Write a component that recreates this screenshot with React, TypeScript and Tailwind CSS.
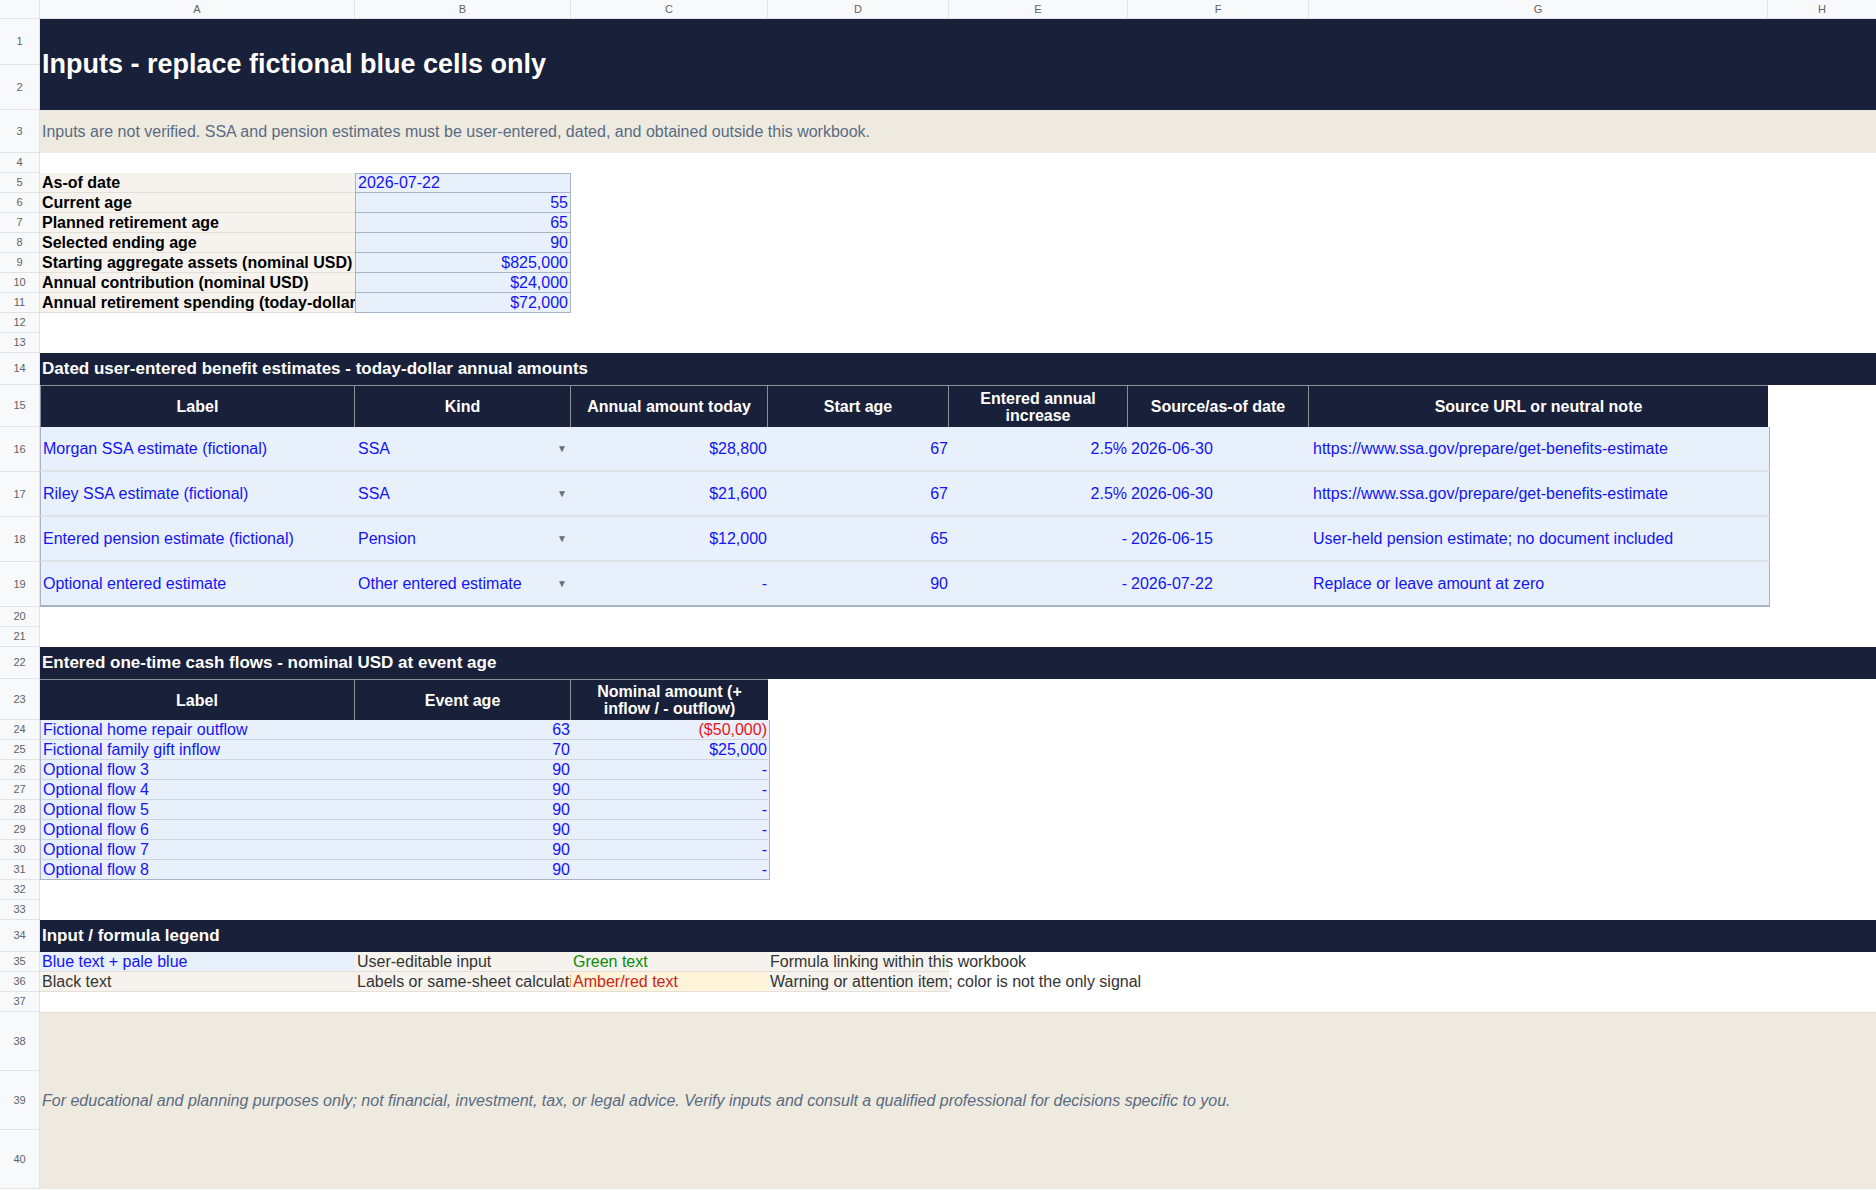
import React from 'react';

const W = ['w-[315px]', 'w-[216px]', 'w-[197px]', 'w-[181px]', 'w-[179px]', 'w-[181px]', 'w-[459px]'];
const BLUE = 'text-[#1414f5]';

function RowNum({ n, className = '' }: { n: string; className?: string }) {
  return (
    <div className={`w-[40px] shrink-0 bg-[#f8f9fa] border-r border-b border-[#e1e3e6] text-[11px] text-[#5f6368] flex items-center justify-center ${className}`}>
      {n}
    </div>
  );
}

function Row({ n, h, children, className = '' }: { n: string; h: string; children?: React.ReactNode; className?: string }) {
  return (
    <div className={`flex ${h}`}>
      <RowNum n={n} />
      <div className={`flex-1 flex min-w-0 ${className}`}>{children}</div>
    </div>
  );
}

function Cell({ w, className = '', children }: { w: string; className?: string; children?: React.ReactNode }) {
  return <div className={`${w} shrink-0 flex items-center px-[2px] whitespace-nowrap overflow-visible ${className}`}>{children}</div>;
}

const inputs = [
  ['As-of date', '2026-07-22'],
  ['Current age', '55'],
  ['Planned retirement age', '65'],
  ['Selected ending age', '90'],
  ['Starting aggregate assets (nominal USD)', '$825,000'],
  ['Annual contribution (nominal USD)', '$24,000'],
  ['Annual retirement spending (today-dollar', '$72,000'],
];

const benefits = [
  ['Morgan SSA estimate (fictional)', 'SSA', '$28,800', '67', '2.5%', '2026-06-30', 'https://www.ssa.gov/prepare/get-benefits-estimate'],
  ['Riley SSA estimate (fictional)', 'SSA', '$21,600', '67', '2.5%', '2026-06-30', 'https://www.ssa.gov/prepare/get-benefits-estimate'],
  ['Entered pension estimate (fictional)', 'Pension', '$12,000', '65', '-', '2026-06-15', 'User-held pension estimate; no document included'],
  ['Optional entered estimate', 'Other entered estimate', '-', '90', '-', '2026-07-22', 'Replace or leave amount at zero'],
];

const flows = [
  ['Fictional home repair outflow', '63', '($50,000)'],
  ['Fictional family gift inflow', '70', '$25,000'],
  ['Optional flow 3', '90', '-'],
  ['Optional flow 4', '90', '-'],
  ['Optional flow 5', '90', '-'],
  ['Optional flow 6', '90', '-'],
  ['Optional flow 7', '90', '-'],
  ['Optional flow 8', '90', '-'],
];

const benefitHeads = ['Label', 'Kind', 'Annual amount today', 'Start age', 'Entered annual increase', 'Source/as-of date', 'Source URL or neutral note'];

function SectionBar({ n, title }: { n: string; title: string }) {
  return (
    <Row n={n} h="h-[32px]" className="bg-[#19203a] items-center">
      <span className="px-[2px] text-[17px] font-bold text-white">{title}</span>
    </Row>
  );
}

export default function App() {
  return (
    <div className="w-[1876px] h-[1190px] overflow-hidden bg-white text-[16px] text-black" style={{ fontFamily: '"Liberation Sans", Arial, sans-serif' }}>
      {/* column headers */}
      <div className="flex h-[19px] bg-[#f8f9fa] text-[11px] text-[#5f6368]">
        <div className="w-[40px] border-r border-b border-[#e1e3e6]" />
        {['A', 'B', 'C', 'D', 'E', 'F', 'G'].map((c, i) => (
          <div key={c} className={`${W[i]} shrink-0 border-r border-b border-[#e1e3e6] flex items-center justify-center`}>{c}</div>
        ))}
        <div className="flex-1 border-b border-[#e1e3e6] flex items-center justify-center">H</div>
      </div>

      {/* title rows 1-2 */}
      <div className="flex h-[91px]">
        <div className="w-[40px] shrink-0 flex flex-col">
          <RowNum n="1" className="flex-1" />
          <RowNum n="2" className="flex-1" />
        </div>
        <div className="flex-1 bg-[#19203a] flex items-center px-[2px]">
          <span className="text-[27px] font-bold text-white">Inputs - replace fictional blue cells only</span>
        </div>
      </div>

      <Row n="3" h="h-[43px]" className="bg-[#eeeae0] items-center">
        <span className="px-[2px] text-[#5b6b82]">Inputs are not verified. SSA and pension estimates must be user-entered, dated, and obtained outside this workbook.</span>
      </Row>
      <Row n="4" h="h-[20px]" />

      {inputs.map(([l, v], i) => (
        <Row key={l} n={String(i + 5)} h="h-[20px]">
          <Cell w={W[0]} className="bg-[#f6f3ee] border-b border-[#e4e0d8] font-bold overflow-hidden">{l}</Cell>
          <Cell w={W[1]} className={`bg-[#e8f0fb] border-x border-b border-[#a8b4c6] ${i === 0 ? 'border-t justify-start' : 'justify-end'} ${BLUE}`}>{v}</Cell>
        </Row>
      ))}
      <Row n="12" h="h-[20px]" />
      <Row n="13" h="h-[20px]" />

      <SectionBar n="14" title="Dated user-entered benefit estimates - today-dollar annual amounts" />
      <Row n="15" h="h-[42px]">
        {benefitHeads.map((h, i) => (
          <Cell key={h} w={W[i]} className={`bg-[#19203a] text-white font-bold justify-center text-center leading-[17px] border-t border-[#8a9099] ${i < 6 ? 'border-r' : ''} ${i === 0 ? 'border-l' : ''}`}>
            <span className={`whitespace-normal ${i === 4 ? 'w-[120px]' : ''}`}>{h}</span>
          </Cell>
        ))}
      </Row>
      {benefits.map((b, r) => (
        <Row key={b[0]} n={String(r + 16)} h="h-[45px]">
          <div className={`flex bg-[#e8f0fb] ${BLUE} border-x border-[#a8b4c6] ${r < 3 ? 'border-b-2 border-b-[#dfe3e8]' : 'border-b-2 border-b-[#a8b4c6]'}`}>
            <Cell w={W[0]}>{b[0]}</Cell>
            <Cell w={W[1]} className="justify-between">
              <span>{b[1]}</span>
              <span className="text-[10px] text-[#6b6f76] pr-[3px]">▼</span>
            </Cell>
            <Cell w={W[2]} className="justify-end">{b[2]}</Cell>
            <Cell w={W[3]} className="justify-end">{b[3]}</Cell>
            <Cell w={W[4]} className="justify-end">{b[4]}</Cell>
            <Cell w={W[5]}>{b[5]}</Cell>
            <Cell w={W[6]} className="pl-[3px]">{b[6]}</Cell>
          </div>
        </Row>
      ))}
      <Row n="20" h="h-[20px]" />
      <Row n="21" h="h-[20px]" />

      <SectionBar n="22" title="Entered one-time cash flows - nominal USD at event age" />
      <Row n="23" h="h-[41px]">
        {['Label', 'Event age', 'Nominal amount (+ inflow / - outflow)'].map((h, i) => (
          <Cell key={h} w={W[i]} className={`bg-[#19203a] text-white font-bold justify-center text-center leading-[17px] border-t border-[#8a9099] ${i < 2 ? 'border-r' : ''}`}>
            <span className={`whitespace-normal ${i === 2 ? 'w-[150px]' : ''}`}>{h}</span>
          </Cell>
        ))}
      </Row>
      {flows.map((f, r) => (
        <Row key={f[0]} n={String(r + 24)} h="h-[20px]">
          <div className={`flex bg-[#e8f0fb] ${BLUE} border-x border-[#a8b4c6] ${r < 7 ? 'border-b border-b-[#cfd5de]' : 'border-b border-b-[#a8b4c6]'}`}>
            <Cell w={W[0]}>{f[0]}</Cell>
            <Cell w={W[1]} className="justify-end">{f[1]}</Cell>
            <Cell w={W[2]} className={`justify-end ${r === 0 ? 'text-[#e81515]' : ''}`}>{f[2]}</Cell>
          </div>
        </Row>
      ))}
      <Row n="32" h="h-[20px]" />
      <Row n="33" h="h-[20px]" />

      <SectionBar n="34" title="Input / formula legend" />
      <Row n="35" h="h-[20px]" className="text-[#333]">
        <Cell w={W[0]} className={`bg-[#e8f0fb] ${BLUE} border-b border-[#e4e0d8]`}>Blue text + pale blue</Cell>
        <Cell w={W[1]} className="bg-[#f6f3ee] border-b border-[#e4e0d8]">User-editable input</Cell>
        <Cell w={W[2]} className="bg-[#f6f3ee] border-b border-[#e4e0d8] text-[#0a8a0a]">Green text</Cell>
        <Cell w={W[3]} className="bg-[#f6f3ee] border-b border-[#e4e0d8]">Formula linking within this workbook</Cell>
      </Row>
      <Row n="36" h="h-[20px]" className="text-[#333]">
        <Cell w={W[0]} className="bg-[#f6f3ee] border-b border-[#e4e0d8]">Black text</Cell>
        <Cell w={W[1]} className="bg-[#f6f3ee] border-b border-[#e4e0d8] overflow-hidden">Labels or same-sheet calculations</Cell>
        <Cell w={W[2]} className="bg-[#fff3d9] border-b border-[#e4e0d8] text-[#c8261a]">Amber/red text</Cell>
        <Cell w={W[3]} className="bg-[#f6f3ee] border-b border-[#e4e0d8]">Warning or attention item; color is not the only signal</Cell>
      </Row>
      <Row n="37" h="h-[20px]" />

      <div className="flex h-[177px]">
        <div className="w-[40px] shrink-0 flex flex-col">
          <RowNum n="38" className="flex-1" />
          <RowNum n="39" className="flex-1" />
          <RowNum n="40" className="flex-1" />
        </div>
        <div className="flex-1 bg-[#eeeae0] border-t border-[#e1ddd3] flex items-center px-[2px]">
          <span className="italic text-[#5b6b82]">For educational and planning purposes only; not financial, investment, tax, or legal advice. Verify inputs and consult a qualified professional for decisions specific to you.</span>
        </div>
      </div>
    </div>
  );
}
